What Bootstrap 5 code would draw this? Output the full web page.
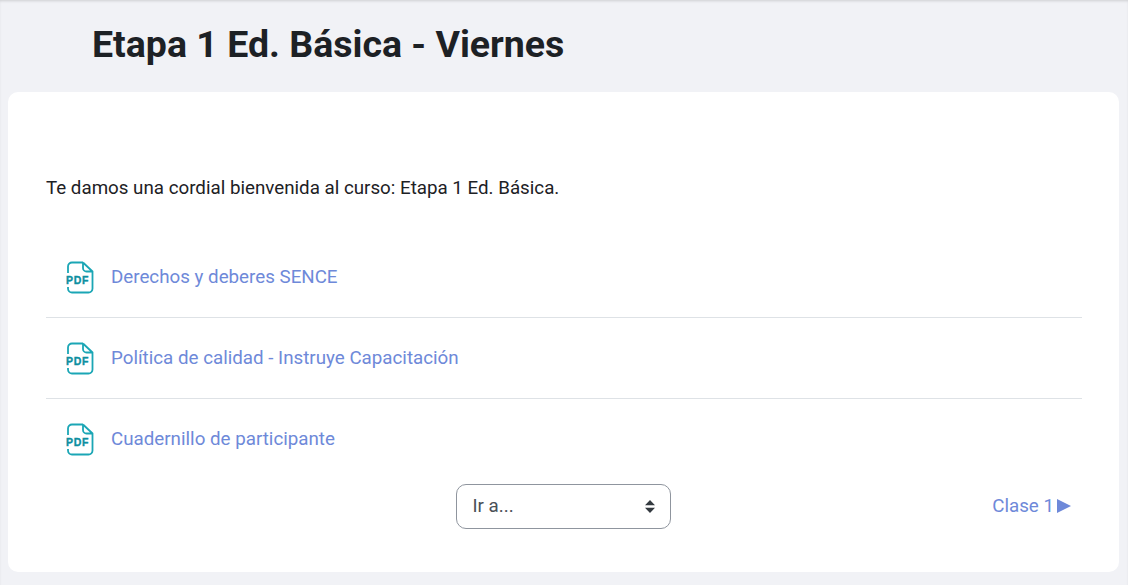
<!DOCTYPE html>
<html lang="es">
<head>
<meta charset="utf-8">
<link href="https://cdn.jsdelivr.net/npm/bootstrap@5.3.0/dist/css/bootstrap.min.css" rel="stylesheet">
<style>
html,body{height:585px;overflow:hidden}
body{background:#f1f2f6;font-family:Roboto,sans-serif;color:#1d2125;font-size:18.75px;box-shadow:inset 0 2px 3px -1px rgba(0,0,0,.15)}
.page-title{font-family:Roboto,sans-serif;font-weight:700;font-size:37.5px;line-height:43px;margin:0;padding:23px 0 0 92px;height:92px;color:#1d2125}
.main-panel{background:#fff;margin:0 9px 0 8px;height:480px;border-radius:10px;padding:85px 37px 0 38px}
.intro{margin:0 0 38px;line-height:22px}
.file-row{height:81px;border-bottom:1px solid #dee2e6;padding-left:20px;gap:17px}
.file-row.last{border-bottom:0;height:auto;padding-top:24px;padding-bottom:28px}
.file-row a,.next-link{color:#6e89d9;text-decoration:none}
.file-ico{width:28px;height:33px;flex:none}
.pdf-label{font-family:"Liberation Sans",sans-serif;font-weight:700;font-size:10.5px;letter-spacing:.7px;fill:#0d8fa0;stroke:#0d8fa0;stroke-width:.35px}
.nav-line{position:relative;justify-content:center;padding-right:2px}
.jump{width:215px;height:45px;border:1px solid #8f959e;border-radius:10px;font-size:18.75px;color:#495057;padding:0 36px 0 16px;background-image:url("data:image/svg+xml,%3csvg xmlns='http://www.w3.org/2000/svg' viewBox='0 0 4 5'%3e%3cpath fill='%23343a40' d='M2 0L0 2h4zm0 5L0 3h4z'/%3e%3c/svg%3e");background-size:10px 12.5px;background-position:right 15px center}
.next-link{position:absolute;right:11px;top:8px;display:flex;align-items:center;gap:3px}
.next-arrow{width:14px;height:14px}
</style>
</head>
<body>
<h1 class="page-title">Etapa 1 Ed. Básica - Viernes</h1>
<main class="main-panel">
<p class="intro">Te damos una cordial bienvenida al curso: Etapa 1 Ed. Básica.</p>
<div class="d-flex align-items-center file-row">
<svg class="file-ico" viewBox="0 0 28 33" fill="none"><path d="M17 1.5H6a4 4 0 0 0-4 4V12M17 1.5 26.5 10.5V27.5a4 4 0 0 1-4 4H6a4 4 0 0 1-4-4V26M17 1.5V7a3.500 3.500 0 0 0 3.500 3.500H26.500" stroke="#1ba6b5" stroke-width="1.800"/><text class="pdf-label" x="0" y="23">PDF</text></svg>
<a href="#">Derechos y deberes SENCE</a>
</div>
<div class="d-flex align-items-center file-row">
<svg class="file-ico" viewBox="0 0 28 33" fill="none"><path d="M17 1.5H6a4 4 0 0 0-4 4V12M17 1.5 26.5 10.5V27.5a4 4 0 0 1-4 4H6a4 4 0 0 1-4-4V26M17 1.5V7a3.500 3.500 0 0 0 3.500 3.500H26.500" stroke="#1ba6b5" stroke-width="1.800"/><text class="pdf-label" x="0" y="23">PDF</text></svg>
<a href="#">Política de calidad - Instruye Capacitación</a>
</div>
<div class="d-flex align-items-center file-row last">
<svg class="file-ico" viewBox="0 0 28 33" fill="none"><path d="M17 1.5H6a4 4 0 0 0-4 4V12M17 1.5 26.5 10.5V27.5a4 4 0 0 1-4 4H6a4 4 0 0 1-4-4V26M17 1.5V7a3.500 3.500 0 0 0 3.500 3.500H26.500" stroke="#1ba6b5" stroke-width="1.800"/><text class="pdf-label" x="0" y="23">PDF</text></svg>
<a href="#">Cuadernillo de participante</a>
</div>
<div class="d-flex nav-line">
<select class="form-select jump"><option>Ir a...</option></select>
<a class="next-link" href="#">Clase 1<svg class="next-arrow" viewBox="0 0 14 14"><path d="M0 0 14 7 0 14Z" fill="#6e89d9"/></svg></a>
</div>
</main>
<script src="https://cdn.jsdelivr.net/npm/bootstrap@5.3.0/dist/js/bootstrap.bundle.min.js"></script>
</body>
</html>
